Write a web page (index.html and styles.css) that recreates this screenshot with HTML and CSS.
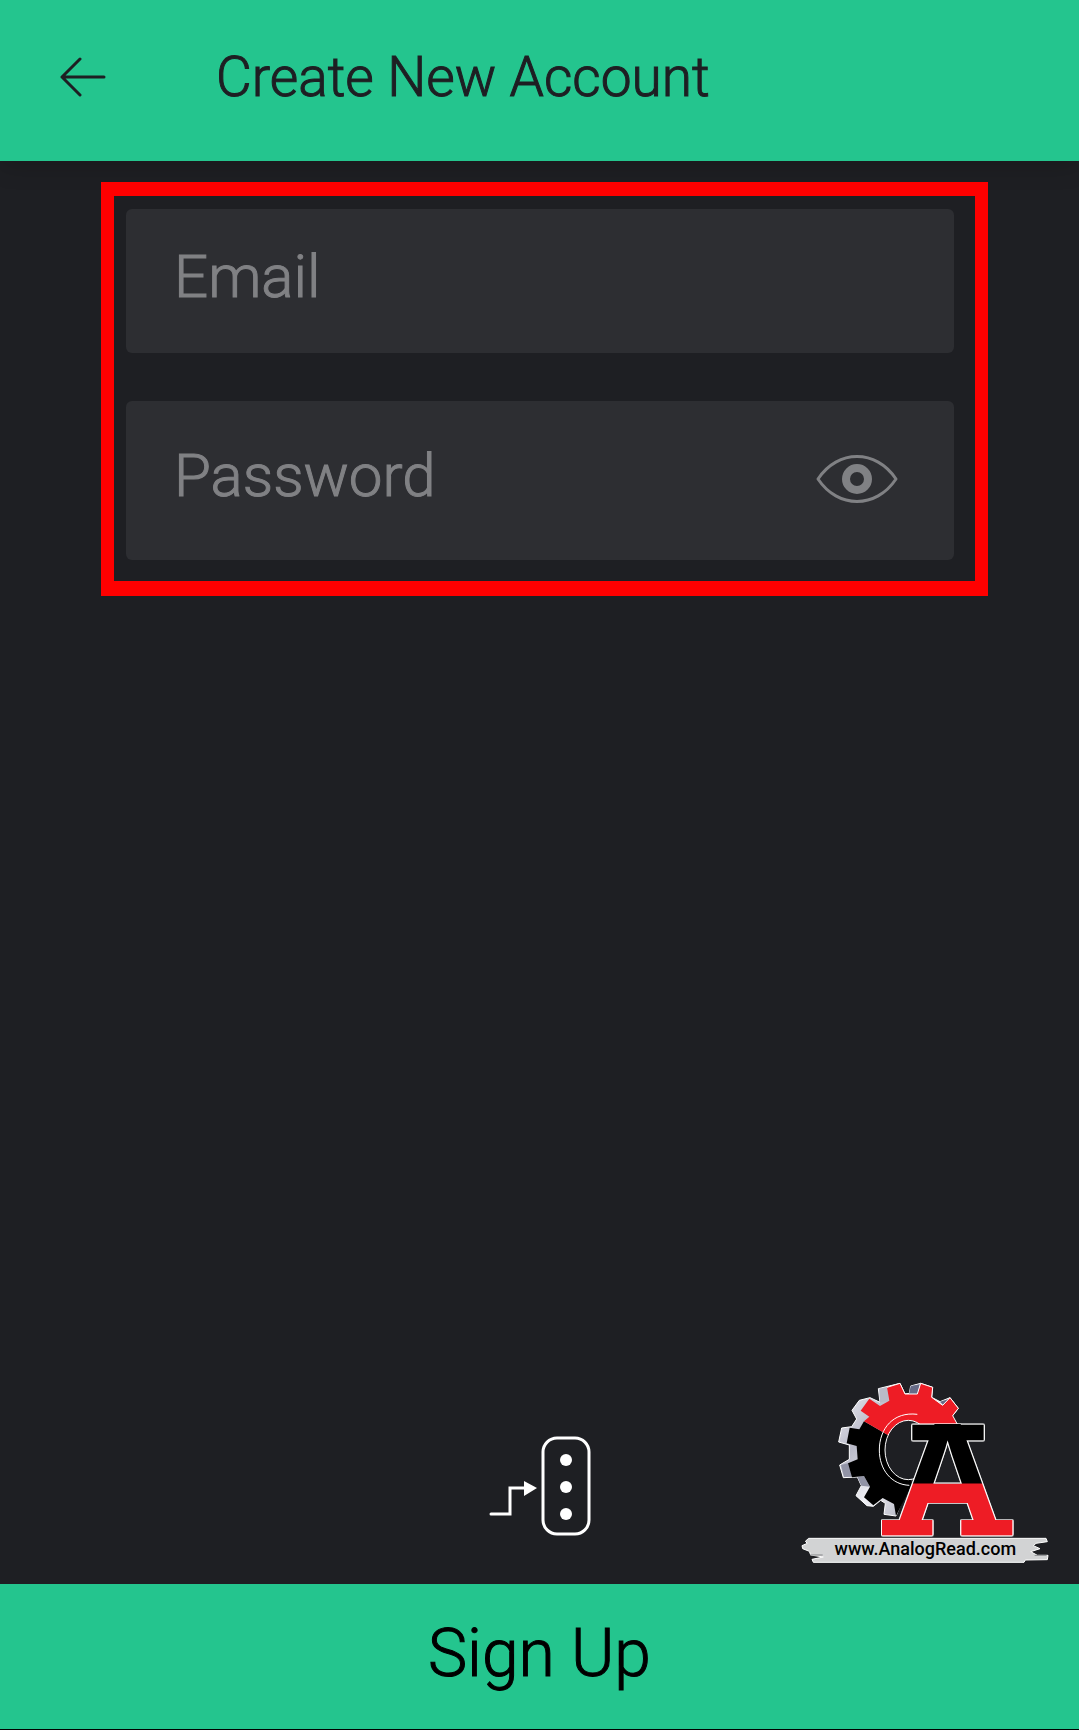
FILE: index.html
```html
<!DOCTYPE html>
<html lang="en">
<head>
  <meta charset="UTF-8" />
  <meta name="viewport" content="width=device-width, initial-scale=1.0"/>
  <title>Create New Account</title>
  <link rel="stylesheet" href="styles.css">
</head>
<body>
  <header class="topbar">
    <a href="#" class="back" aria-label="Back">
      <svg width="46" height="40" viewBox="0 0 46 40">
        <path d="M44 20H2M20 2L2 20L20 38" />
      </svg>
    </a>
    <h1>Create New Account</h1>
  </header>

  <form class="signup">
    <div class="fields">
      <div class="field">
        <input type="email" id="email" aria-label="Email" placeholder="Email">
      </div>
      <div class="field field-password">
        <input type="password" id="password" aria-label="Password" placeholder="Password">
        <button type="button" class="reveal" id="reveal" aria-label="Show password">
          <svg width="82" height="48" viewBox="0 0 82 48">
            <path d="M2 24C22 -6 60 -6 80 24C60 54 22 54 2 24Z" fill="none" stroke="#808184" stroke-width="3" stroke-linejoin="round" />
            <circle cx="41" cy="24" r="11" fill="none" stroke="#808184" stroke-width="8" />
          </svg>
        </button>
      </div>
    </div>

    <div class="brand">
      <button type="button" class="server" aria-label="Server settings">
        <svg width="102" height="100" viewBox="0 0 102 100">
          <path d="M2 78H21V52H36" fill="none" stroke="#fff" stroke-width="3" stroke-linecap="round" />
          <path d="M35 45L48 52L35 60Z" fill="#fff" />
          <rect x="54" y="2" width="46" height="96" rx="14" fill="none" stroke="#fff" stroke-width="3" />
          <circle cx="77" cy="24" r="6" fill="#fff" />
          <circle cx="77" cy="51" r="6" fill="#fff" />
          <circle cx="77" cy="78" r="6" fill="#fff" />
        </svg>
      </button>

      <a href="#" class="logo" aria-label="AnalogRead">
        <svg width="270" height="210" viewBox="0 0 810 630">
          <defs>
            <linearGradient id="steel" x1="0" y1="0" x2="1" y2="1">
              <stop offset="0" stop-color="#f4f4f8" />
              <stop offset="0.3" stop-color="#b9bac8" />
              <stop offset="0.55" stop-color="#f0f0f5" />
              <stop offset="1" stop-color="#777a90" />
            </linearGradient>
            <linearGradient id="halves" gradientUnits="userSpaceOnUse" x1="0" y1="340" x2="0" y2="341">
              <stop offset="0" stop-color="#000" />
              <stop offset="1" stop-color="#ee1c25" />
            </linearGradient>
          </defs>

          <!-- gear side walls -->
          <path d="M318 438L282 433L286 400L272 391L250 409L231 407L198 377L214 347L202 321L160 323L149 285L178 268L178 225L146 216L155 174L185 170L200 147L186 121L208 91L240 83L270 97L265 56L330 40L345 72L358 70L362 48L392 40L428 52L425 82L450 95L480 83L505 115L488 137L400 240Z" fill="url(#steel)" stroke="#fff" stroke-width="3" />
          <path d="M362 48L390 43L382 72L357 72Z" fill="#666b87" />
          <path d="M450 95L478 86L460 106Z" fill="#666b87" />
          <path d="M268 56L293 51L295 92L270 98Z" fill="#babbc8" />
          <path d="M153 285L174 280L188 320L162 321Z" fill="#9294a6" />
          <path d="M202 321L222 318L240 350L214 347Z" fill="#9294a6" />

          <!-- gear face -->
          <path fill="#000" d="M222 154L208 178L179 173L170 220L200 228L203 268L174 280L186 322L222 318L240 350L222 382L250 406L278 384L312 402L318 438L365 345L355 230Z" />
          <path fill="#ee1c25" d="M222 154L238 140L212 122L238 86L270 108L298 92L291 52L330 40L345 72L382 72L392 40L428 52L425 82L458 106L480 83L505 115L488 137L505 168L355 230Z" />
          <path fill="none" stroke="#fff" stroke-width="3" d="M291 52L330 40L345 72L382 72L392 40L428 52L425 82L458 106L480 83L505 115L488 137L505 168" />
          <ellipse cx="355" cy="240" rx="70" ry="89" fill="#1e1f23" stroke="#fff" stroke-width="3" />
          <path fill="none" stroke="#fff" stroke-width="3" d="M382 133C310 124 268 176 268 240C268 300 305 344 358 346" />

          <!-- letter mark with its slabs -->
          <g class="mark" fill="url(#halves)">
            <text x="473" y="480" text-anchor="middle">A</text>
            <rect x="367" y="164" width="214" height="47" />
            <rect x="408" y="341" width="130" height="47" />
            <rect x="276" y="450" width="151" height="46" />
            <rect x="514" y="450" width="153" height="46" />
          </g>

          <!-- address plate -->
          <path fill="#d2d3d4" stroke="#fff" stroke-width="3" d="M56 505H768L772 515L738 520L730 527L750 536L722 545L742 556H774L772 569L706 570L702 577H70L66 568L100 561L62 555L58 544L38 536L36 527L52 520L46 514Z" />
          <path fill="none" stroke="#858688" stroke-width="3" d="M60 555H98M734 556H770" />
          <text class="address" x="406" y="556" text-anchor="middle">www.AnalogRead.com</text>
        </svg>
      </a>
    </div>

    <button type="submit" class="submit">Sign Up</button>
  </form>

  <script>
    const password = document.getElementById("password");

    document.getElementById("reveal").onclick = () => {
      password.type = password.type === "password" ? "text" : "password";
    };
  </script>
</body>
</html>
```
FILE: styles.css
```css
* {
  box-sizing: border-box;
}

body {
  font-family: Roboto, "Open Sans", sans-serif;
  font-weight: 300;
  background: #1e1f23;
  color: #1e1f23;
  margin: 0;
  min-height: 100vh;
  display: flex;
  flex-direction: column;
}

button {
  padding: 0;
  border: none;
  background: none;
  font: inherit;
  cursor: pointer;
}

svg {
  display: block;
}

.topbar {
  display: flex;
  align-items: center;
  gap: 110px;
  height: 161px;
  padding: 0 60px 8px;
  background: #24c58e;
  box-shadow: 0 4px 24px rgba(0, 0, 0, 0.2);
}

.back path {
  fill: none;
  stroke: #1e1f23;
  stroke-width: 3;
  stroke-linecap: round;
  stroke-linejoin: round;
}

h1 {
  margin: 0;
  font-size: 55px;
  font-weight: 300;
}

h1, .field input::placeholder, .submit {
  -webkit-text-stroke: 1px currentColor;
}

.signup {
  flex: 1;
  display: flex;
  flex-direction: column;
}

.fields {
  display: flex;
  flex-direction: column;
  gap: 48px;
  margin: 21px 91px 0 101px;
  padding: 13px 21px 21px 12px;
  border: 14px solid #f00;
  border-width: 14px 13px 15px;
}

.field {
  display: flex;
  align-items: center;
  height: 144px;
  padding: 0 56px 0 48px;
  background: #2d2e32;
  border-radius: 6px;
}

.field-password {
  height: 159px;
}

.field input {
  flex: 1;
  min-width: 0;
  height: 100%;
  padding: 0 0 10px;
  border: none;
  outline: none;
  background: none;
  color: #fff;
  font: inherit;
  font-size: 60px;
}

.field input::placeholder {
  color: #808184;
  opacity: 1;
}

.reveal {
  padding-bottom: 4px;
}

.brand {
  flex: 1;
  display: grid;
  grid-template-columns: 1fr auto 1fr;
  align-items: end;
}

.server {
  grid-column: 2;
  margin-bottom: 48px;
}

.logo {
  justify-self: end;
  margin: 0 19px 4px 0;
}

.mark {
  font-family: "Liberation Sans", Arial, sans-serif;
  font-size: 460px;
  font-weight: 700;
  filter: drop-shadow(2px 0 #fff) drop-shadow(-2px 0 #fff) drop-shadow(0 2px #fff) drop-shadow(0 -2px #fff);
}

.address {
  font-size: 54px;
  font-weight: 500;
}

.submit {
  height: 146px;
  padding-bottom: 6px;
  border-bottom: 1px solid #000;
  background: #24c58e;
  color: #000;
  font-size: 66px;
}
```
